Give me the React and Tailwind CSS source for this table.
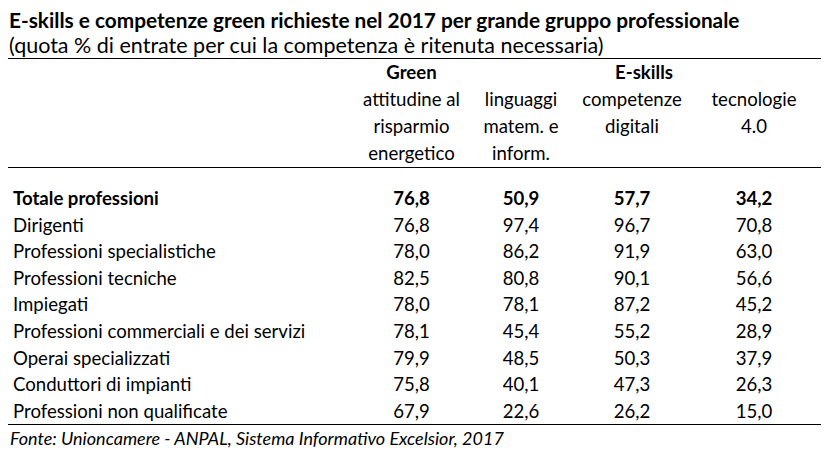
const rows = [
  ["Dirigenti", "76,8", "97,4", "96,7", "70,8"],
  ["Professioni specialistiche", "78,0", "86,2", "91,9", "63,0"],
  ["Professioni tecniche", "82,5", "80,8", "90,1", "56,6"],
  ["Impiegati", "78,0", "78,1", "87,2", "45,2"],
  ["Professioni commerciali e dei servizi", "78,1", "45,4", "55,2", "28,9"],
  ["Operai specializzati", "79,9", "48,5", "50,3", "37,9"],
  ["Conduttori di impianti", "75,8", "40,1", "47,3", "26,3"],
  ["Professioni non qualificate", "67,9", "22,6", "26,2", "15,0"],
];

function Row({ cells, bold }) {
  return (
    <div className={"flex h-[26.6px] items-center " + (bold ? "font-bold" : "")}>
      <div className="w-[350px] pl-[5px]">{cells[0]}</div>
      <div className="w-[107px] text-center">{cells[1]}</div>
      <div className="w-[112px] text-center">{cells[2]}</div>
      <div className="w-[110px] text-center">{cells[3]}</div>
      <div className="w-[134px] text-center">{cells[4]}</div>
    </div>
  );
}

export default function App() {
  return (
    <div
      className="w-[839px] h-[449px] bg-white text-black text-[18.6px] leading-none pl-[8px] pt-[8px]"
      style={{ fontFamily: "Lato, 'Open Sans', sans-serif" }}
    >
      <div className="w-[813px]">
        <div className="h-[25px] flex items-center pl-[1px] font-bold text-[20.8px] whitespace-nowrap">
          E-skills e competenze green richieste nel 2017 per grande gruppo professionale
        </div>
        <div className="h-[26px] flex items-center pl-[1px] border-b border-black text-[21.5px] whitespace-nowrap">
          (quota % di entrate per cui la competenza è ritenuta necessaria)
        </div>

        <div className="border-b border-black">
          <div className="flex h-[27px] items-center font-bold">
            <div className="w-[350px]"></div>
            <div className="w-[107px] text-center">Green</div>
            <div className="w-[112px]"></div>
            <div className="w-[110px] text-center pl-6">E-skills</div>
            <div className="w-[134px]"></div>
          </div>
          <div className="flex">
            <div className="w-[350px]"></div>
            <div className="w-[107px] text-center flex flex-col">
              <span className="h-[27px] flex items-center justify-center whitespace-nowrap">attitudine al</span>
              <span className="h-[27px] flex items-center justify-center">risparmio</span>
              <span className="h-[27px] flex items-center justify-center">energetico</span>
            </div>
            <div className="w-[112px] text-center flex flex-col">
              <span className="h-[27px] flex items-center justify-center">linguaggi</span>
              <span className="h-[27px] flex items-center justify-center">matem. e</span>
              <span className="h-[27px] flex items-center justify-center">inform.</span>
            </div>
            <div className="w-[110px] text-center flex flex-col">
              <span className="h-[27px] flex items-center justify-center">competenze</span>
              <span className="h-[27px] flex items-center justify-center">digitali</span>
            </div>
            <div className="w-[134px] text-center flex flex-col">
              <span className="h-[27px] flex items-center justify-center">tecnologie</span>
              <span className="h-[27px] flex items-center justify-center">4.0</span>
            </div>
          </div>
        </div>

        <div className="border-b border-black">
          <div className="h-[17px]"></div>
          <Row cells={["Totale professioni", "76,8", "50,9", "57,7", "34,2"]} bold />
          {rows.map((r) => (
            <Row key={r[0]} cells={r} />
          ))}
        </div>

        <div className="h-[26px] flex items-center pl-[2px] italic text-[18px]">
          Fonte: Unioncamere - ANPAL, Sistema Informativo Excelsior, 2017
        </div>
      </div>
    </div>
  );
}
